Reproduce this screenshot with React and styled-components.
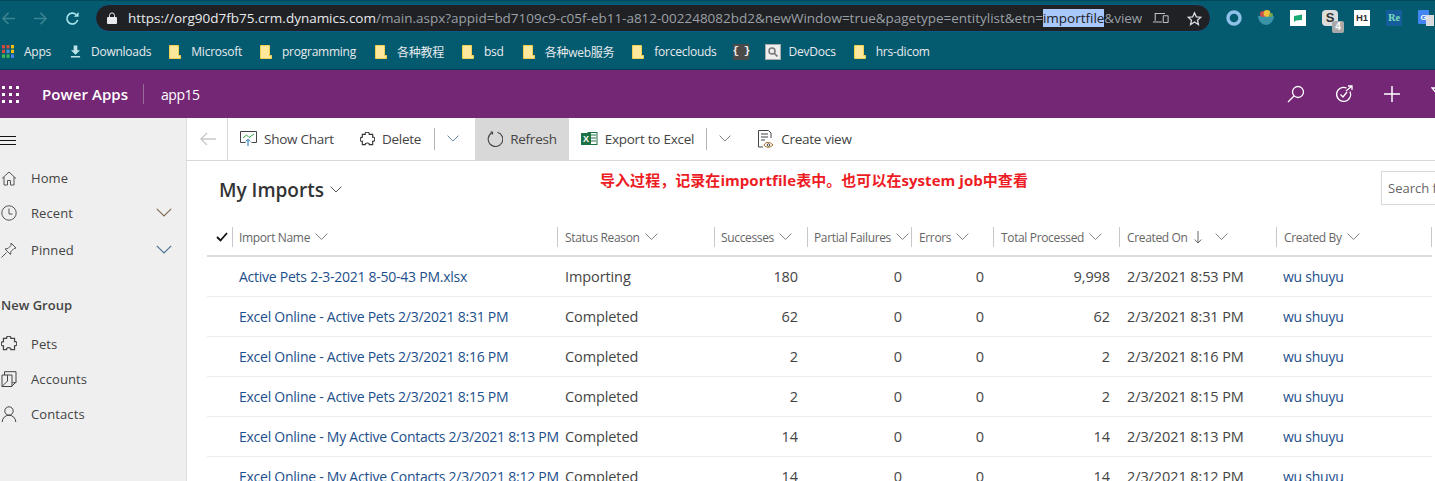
import React from 'react'
import styled, { createGlobalStyle } from 'styled-components'

const uiFont = `"Open Sans", "Noto Sans CJK SC", sans-serif`

const GlobalStyle = createGlobalStyle`
  html, body {
    margin: 0;
    padding: 0;
    background: #fff;
    font-family: ${uiFont};
  }
`

const columns = '25px 325px 157px 93px 104px 82px 126px 157px 155px'

const bookmarks = [
  { label: '各种教程', gap: 18 },
  { label: 'bsd', gap: 19 },
  { label: '各种web服务', gap: 18 },
  { label: 'forceclouds', gap: 16 },
]

const headers = [
  { label: 'Import Name', pad: 7 },
  { label: 'Status Reason', pad: 8 },
  { label: 'Successes', pad: 7 },
  { label: 'Partial Failures', pad: 7 },
  { label: 'Errors', pad: 8 },
  { label: 'Total Processed', pad: 8 },
  { label: 'Created On', pad: 8, sorted: true },
  { label: 'Created By', pad: 8 },
]

const rows = [
  ['Active Pets 2-3-2021 8-50-43 PM.xlsx', 'Importing', '180', '0', '0', '9,998', '2/3/2021 8:53 PM'],
  ['Excel Online - Active Pets 2/3/2021 8:31 PM', 'Completed', '62', '0', '0', '62', '2/3/2021 8:31 PM'],
  ['Excel Online - Active Pets 2/3/2021 8:16 PM', 'Completed', '2', '0', '0', '2', '2/3/2021 8:16 PM'],
  ['Excel Online - Active Pets 2/3/2021 8:15 PM', 'Completed', '2', '0', '0', '2', '2/3/2021 8:15 PM'],
  ['Excel Online - My Active Contacts 2/3/2021 8:13 PM', 'Completed', '14', '0', '0', '14', '2/3/2021 8:13 PM'],
  ['Excel Online - My Active Contacts 2/3/2021 8:12 PM', 'Completed', '14', '0', '0', '14', '2/3/2021 8:12 PM'],
]

function Chevron({ size = 12, color = '#666' }) {
  return (
    <svg width={size} height={size * 0.6} viewBox="0 0 20 12" fill="none" stroke={color} strokeWidth="1.4">
      <path d="M1 1l9 9 9-9" />
    </svg>
  )
}

function Folder() {
  return (
    <svg width="12" height="14" viewBox="0 0 12 14">
      <path d="M.5.5h9v10h2v3H.5z" fill="#ffe79b" stroke="#f5cf52" />
      <path d="M9.5 10.5h2" stroke="#f5cf52" />
    </svg>
  )
}

function Puzzle({ size = 16, color = '#333' }) {
  return (
    <svg width={size} height={size} viewBox="1.5 1.5 13 13" fill="none" stroke={color} strokeWidth="1">
      <path d="M3.500 3.500H6C5.500 1 10 1 9.500 3.500h3V6c2.500-.5 2.500 4 0 3.500v3h-3c.5-2-3.500-2-3.500 0H3.500v-3C1 10 1 6 3.500 6z" />
    </svg>
  )
}

function App() {
  return (
    <>
      <GlobalStyle />
      <Page>
        <BrowserBar>
          <NavIcons>
            <svg width="15" height="15" viewBox="0 0 16 16" fill="none" stroke="#3b8390" strokeWidth="1.6"><path d="M15 8H2M8 2L2 8l6 6" /></svg>
            <svg width="15" height="15" viewBox="0 0 16 16" fill="none" stroke="#3b8390" strokeWidth="1.6"><path d="M1 8h13M8 2l6 6-6 6" /></svg>
            <svg width="15" height="15" viewBox="0 0 16 16" fill="none" stroke="#a8e6ec" strokeWidth="1.7"><path d="M13.500 9.500A5.800 5.800 0 1 1 12 4" /><path d="M14.500 1v5h-5z" fill="#a8e6ec" stroke="none" /></svg>
          </NavIcons>
          <AddressBar>
            <svg width="10" height="12" viewBox="0 0 10 12"><path d="M1 5h8a1 1 0 0 1 1 1v5a1 1 0 0 1-1 1H1a1 1 0 0 1-1-1V6a1 1 0 0 1 1-1z" fill="#e8eaed" /><path d="M2.500 5V3.400a2.500 2.500 0 0 1 5 0V5" fill="none" stroke="#e8eaed" /></svg>
            <UrlText>
              <b>https://org90d7fb75.crm.dynamics.com</b>/main.aspx?appid=bd7109c9-c05f-eb11-a812-002248082bd2&amp;newWindow=true&amp;pagetype=entitylist&amp;etn=<mark>importfile</mark>&amp;view
            </UrlText>
            <svg width="16" height="12" viewBox="0 0 18 12" fill="none" stroke="#bdc1c6" strokeWidth="1.2"><path d="M2.500 9V1h11M0 10.500h10" /><rect x="11.500" y="3.500" width="5.500" height="7.500" rx=".5" /></svg>
            <svg width="15" height="15" viewBox="0 0 16 15" fill="none" stroke="#dadce0" strokeWidth="1.4"><path d="M8 1.500l2 4.300 4.600.5-3.400 3.100 1 4.600L8 11.300l-4.200 2.700 1-4.600L1.400 6.300 6 5.800z" /></svg>
          </AddressBar>
          <Extensions>
            <svg width="16" height="16" viewBox="0 0 16 16"><circle cx="8" cy="8" r="6" fill="none" stroke="#8ec1e8" strokeWidth="3.4" /></svg>
            <svg width="16" height="16" viewBox="0 0 16 16"><path d="M0 6h16a8 9 0 0 1-16 0z" fill="#3b93a8" /><circle cx="5" cy="4" r="3" fill="#c9534a" /><circle cx="9" cy="3.400" r="3.400" fill="#f3c03d" /><circle cx="13" cy="5" r="2" fill="#79a84a" /></svg>
            <svg width="16" height="16" viewBox="0 0 16 16"><rect width="16" height="16" fill="#fff" /><path d="M4 6l8-1.500V10l-6 .5L4 12z" fill="#19a974" /></svg>
            <ExtensionTile>S<ExtensionBadge>4</ExtensionBadge></ExtensionTile>
            <H1Tile>H1</H1Tile>
            <ReTile>Re</ReTile>
            <svg width="16" height="16" viewBox="0 0 16 16"><rect width="11" height="14" fill="#4285f4" rx="1" /><rect x="8" y="5" width="8" height="11" fill="#dadce0" /><text x="2.500" y="10" fontSize="8" fill="#fff" fontWeight="700" fontFamily="Liberation Sans">G</text></svg>
          </Extensions>
        </BrowserBar>

        <BookmarkBar>
          <BookmarkItem $gap={19}>
            <svg width="12" height="13" viewBox="0 0 12 13">
              {[0, 1, 2].map(r => [0, 1, 2].map(c => (
                <rect key={`${r}${c}`} x={c * 4.500} y={r * 4.700} width="3" height="3.400" fill={[['#d9483b', '#d9483b', '#f4c20d'], ['#d9483b', '#4a90d9', '#f4c20d'], ['#3cba54', '#3cba54', '#4885ed']][r][c]} />
              )))}
            </svg>
            <span>Apps</span>
          </BookmarkItem>
          <BookmarkItem $gap={18}>
            <svg width="11" height="13" viewBox="0 0 12 13" fill="#bfe3e8"><path d="M4 0h4v5h3L6 10 1 5h3zM1 11.500h10V13H1z" /></svg>
            <span>Downloads</span>
          </BookmarkItem>
          <BookmarkItem $gap={18}><Folder /><span>Microsoft</span></BookmarkItem>
          <BookmarkItem $gap={19}><Folder /><span>programming</span></BookmarkItem>
          {bookmarks.map(b => (
            <BookmarkItem key={b.label} $gap={b.gap}><Folder /><span>{b.label}</span></BookmarkItem>
          ))}
          <BookmarkItem $gap={16}><BracesTile>{'{ }'}</BracesTile></BookmarkItem>
          <BookmarkItem $gap={18} $inner={8}>
            <svg width="16" height="16" viewBox="0 0 16 16"><rect x=".5" y=".5" width="15" height="15" fill="#eee" stroke="#aaa" /><circle cx="7" cy="7" r="3" fill="none" stroke="#777" strokeWidth="1.500" /><path d="M9 9l3.500 3.500" stroke="#777" strokeWidth="1.700" /></svg>
            <span>DevDocs</span>
          </BookmarkItem>
          <BookmarkItem $gap={0}><Folder /><span>hrs-dicom</span></BookmarkItem>
        </BookmarkBar>

        <AppBar>
          <Waffle>
            {Array.from({ length: 9 }).map((_, i) => <i key={i} />)}
          </Waffle>
          <Brand>Power Apps</Brand>
          <AppName>app15</AppName>
          <AppBarIcons>
            <svg width="18" height="18" viewBox="0 0 18 18" fill="none" stroke="#fff" strokeWidth="1.300"><circle cx="11" cy="7" r="5.500" /><path d="M7 11l-6 6" /></svg>
            <svg width="18" height="18" viewBox="0 0 18 18" fill="none" stroke="#fff" strokeWidth="1.300"><path d="M15 6.500A7 7 0 1 1 11.500 3" /><path d="M5.500 9.500l2.500 2.500 4-5M11 6l6-5M13 1h4v4" /></svg>
            <svg width="18" height="18" viewBox="0 0 18 18" fill="none" stroke="#fff" strokeWidth="1.500"><path d="M9 1v16M1 9h16" /></svg>
            <svg width="18" height="18" viewBox="0 0 18 18" fill="none" stroke="#fff" strokeWidth="1.300"><path d="M1 3h16l-6 7v6l-4-2v-4z" /></svg>
          </AppBarIcons>
        </AppBar>

        <Body>
          <Sidebar>
            <Hamburger><i /><i /><i /></Hamburger>
            <NavItem $top={24}>
              <svg width="16" height="15" viewBox="0 0 15 15" fill="none" stroke="#555" strokeWidth="1"><path d="M.5 7.500L7.500 1l7 6.500M2.500 6v8h3.500V9.500h3V14h3.500V6" /></svg>
              Home
            </NavItem>
            <NavItem $top={17}>
              <svg width="16" height="16" viewBox="0 0 16 16" fill="none" stroke="#555" strokeWidth="1"><circle cx="8" cy="8" r="7.200" /><path d="M8 3.500V9h3.500" /></svg>
              Recent
              <NavChevron><Chevron size={16} color="#7c6a50" /></NavChevron>
            </NavItem>
            <NavItem $top={19}>
              <svg width="16" height="16" viewBox="0 0 16 16" fill="none" stroke="#555" strokeWidth="1"><path d="M10 1l5 5-2 .5-3 3-.5 3L4 7l3-.5 3-3zM5.500 10.500L.5 15.500" /></svg>
              Pinned
              <NavChevron><Chevron size={16} color="#4a6f8f" /></NavChevron>
            </NavItem>
            <GroupTitle>New Group</GroupTitle>
            <NavItem $top={21}>
              <Puzzle size={16} color="#444" />
              Pets
            </NavItem>
            <NavItem $top={17}>
              <svg width="16" height="16" viewBox="0 0 15 16" fill="none" stroke="#444" strokeWidth="1"><path d="M.5 4h10v11.500H.5zM3 4V.7h11.500v11H11M14 11.500L10.500 15" /><path d="M.5 15.500L6 10V4" /></svg>
              Accounts
            </NavItem>
            <NavItem $top={17}>
              <svg width="16" height="16" viewBox="0 0 15 16" fill="none" stroke="#444" strokeWidth="1"><circle cx="7.500" cy="5" r="4.200" /><path d="M.7 16a6.800 6.800 0 0 1 13.600 0" /></svg>
              Contacts
            </NavItem>
          </Sidebar>

          <Main>
            <CommandBar>
              <BackButton>
                <svg width="16" height="14" viewBox="0 0 16 14" fill="none" stroke="#c8c8c8" strokeWidth="1.300"><path d="M16 7H1M7 1L1 7l6 6" /></svg>
              </BackButton>
              <CommandButton $left={12} $right={26}>
                <svg width="17" height="16" viewBox="0 0 17 16" fill="none"><path d="M.5.5h16v11h-5M5.500 11.500h-5V.5" stroke="#444" /><path d="M3 7l3.500-3 2.500 2.500L14 3" stroke="#30a04a" /><path d="M8 15V8.500M5.800 10.500L8 8.300l2.200 2.200" stroke="#1a6fb5" /></svg>
                Show Chart
              </CommandButton>
              <CommandButton $left={0} $right={13}>
                <Puzzle size={15} />
                Delete
              </CommandButton>
              <CommandDivider />
              <SplitChevron $right={16}><Chevron color="#4a6f8f" /></SplitChevron>
              <CommandButton $active $left={12} $right={12}>
                <svg width="16" height="16" viewBox="0 0 16 16" fill="none" stroke="#444" strokeWidth="1.100"><path d="M5 1.800A7.300 7.300 0 1 0 10.500 1.200" /><path d="M3.500 1H5.500v2.500" /></svg>
                Refresh
              </CommandButton>
              <CommandButton $left={12} $right={12}>
                <svg width="17" height="16" viewBox="0 0 17 16"><rect x="7" y="1.500" width="9" height="12" fill="#fff" stroke="#1e7145" /><path d="M10 4h5M10 7h5M10 10h5" stroke="#1e7145" /><rect y="2" width="10" height="12" fill="#1e7145" /><text x="2" y="11" fontSize="9" fill="#fff" fontWeight="700" fontFamily="Liberation Sans">X</text></svg>
                Export to Excel
              </CommandButton>
              <CommandDivider />
              <SplitChevron $right={27}><Chevron color="#666" /></SplitChevron>
              <CommandButton $left={0} $right={0}>
                <svg width="16" height="18" viewBox="0 0 16 18" fill="none" stroke="#444" strokeWidth="1"><path d="M.5 17V.5h10L13 3v5M3 4h7M3 7h7M3 10h4M.5 17H5" /><path d="M6 15c2-3.500 6-3.500 9 0-3 3-7 3-9 0z" stroke="#a9701f" /><circle cx="10.500" cy="15" r="1.300" /></svg>
                Create view
              </CommandButton>
            </CommandBar>

            <TitleRow>
              <Title>My Imports</Title>
              <Chevron size={12} color="#333" />
              <SearchBox>Search for records</SearchBox>
              <Annotation>导入过程，记录在importfile表中。也可以在system job中查看</Annotation>
            </TitleRow>

            <HeaderRow>
              <CheckCell>
                <svg width="12" height="10" viewBox="0 0 12 10" fill="none" stroke="#111" strokeWidth="1.800"><path d="M1 5l3.500 3.500L11 1" /></svg>
              </CheckCell>
              {headers.map(h => (
                <HeaderCell key={h.label} $pad={h.pad}>
                  {h.label}
                  {h.sorted && <SortArrow><svg width="8" height="13" viewBox="0 0 8 13" fill="none" stroke="#666"><path d="M4 0v12M.7 8.500L4 12l3.300-3.500" /></svg></SortArrow>}
                  <Chevron size={13} color="#777" />
                </HeaderCell>
              ))}
              <HeaderEnd />
            </HeaderRow>

            {rows.map(r => (
              <Row key={r[0] + r[6]}>
                <span />
                <LinkCell>{r[0]}</LinkCell>
                <TextCell>{r[1]}</TextCell>
                <NumberCell>{r[2]}</NumberCell>
                <NumberCell>{r[3]}</NumberCell>
                <NumberCell>{r[4]}</NumberCell>
                <NumberCell>{r[5]}</NumberCell>
                <TextCell>{r[6]}</TextCell>
                <LinkCell>wu shuyu</LinkCell>
              </Row>
            ))}
          </Main>
        </Body>
      </Page>
    </>
  )
}

export default App

const Page = styled.div`
  width: 1435px;
  height: 481px;
  overflow: hidden;
  display: flex;
  flex-direction: column;
  background: #fff;
`

const BrowserBar = styled.div`
  height: 35px;
  flex: none;
  display: flex;
  align-items: center;
  background: #045b70;
  border-top: 1px solid #03485a;
  box-sizing: border-box;
`

const NavIcons = styled.div`
  width: 95px;
  flex: none;
  display: flex;
  gap: 17px;
  padding-left: 1px;
  box-sizing: border-box;
`

const AddressBar = styled.div`
  width: 1116px;
  height: 28px;
  flex: none;
  box-sizing: border-box;
  display: flex;
  align-items: center;
  padding: 0 8px 0 11px;
  gap: 6px;
  background: #202124;
  border: 1px solid #0b5d87;
  border-radius: 14px;
  color: #fff;
  > svg:nth-of-type(2) { margin-left: 5px; }
  > svg:nth-of-type(3) { margin-left: 12px; }
`

const UrlText = styled.div`
  flex: 1;
  min-width: 0;
  overflow: hidden;
  white-space: nowrap;
  margin-left: 5px;
  font-size: 13.5px;
  letter-spacing: -0.015px;
  color: #9aa0a6;
  > b { font-weight: 400; color: #e8eaed; }
  > mark { background: #a8c7fa; color: #202124; }
`

const Extensions = styled.div`
  display: flex;
  align-items: center;
  gap: 16px;
  margin-left: 15px;
  flex: none;
`

const ExtensionTile = styled.div`
  position: relative;
  width: 16px;
  height: 16px;
  border-radius: 4px;
  background: #ddd;
  color: #333;
  font: 700 13px/16px "Liberation Sans", sans-serif;
  text-align: center;
`

const ExtensionBadge = styled.span`
  position: absolute;
  right: -6px;
  bottom: -7px;
  width: 12px;
  height: 12px;
  border-radius: 2px;
  background: #a9a9a9;
  color: #fff;
  font: 700 10px/12px "Liberation Sans", sans-serif;
`

const H1Tile = styled.div`
  width: 16px;
  height: 16px;
  background: #fff;
  color: #333;
  font: 700 9.5px/16px "Liberation Sans", sans-serif;
  text-align: center;
`

const ReTile = styled.div`
  width: 16px;
  height: 16px;
  background: #155d9a;
  color: #7fe0c0;
  font: 700 10px/16px "Liberation Serif", serif;
  text-align: center;
`

const BookmarkBar = styled.div`
  height: 35px;
  flex: none;
  box-sizing: border-box;
  padding: 0 0 1px 2px;
  display: flex;
  align-items: center;
  background: #045b70;
  border-bottom: 1px solid #03404f;
`

const BookmarkItem = styled.div`
  display: flex;
  align-items: center;
  gap: ${p => p.$inner ?? 10}px;
  margin-right: ${p => p.$gap}px;
  font-size: 12px;
  letter-spacing: -0.25px;
  color: #e8eaed;
  white-space: nowrap;
`

const BracesTile = styled.div`
  width: 16px;
  height: 16px;
  background: #4a4a4a;
  color: #eee;
  font: 700 11px/15px "Liberation Mono", monospace;
  text-align: center;
  white-space: nowrap;
  letter-spacing: -1px;
`

const AppBar = styled.div`
  height: 48px;
  flex: none;
  display: flex;
  align-items: center;
  background: #742774;
  color: #fff;
`

const Waffle = styled.div`
  width: 17px;
  margin-left: 2px;
  display: grid;
  grid-template-columns: repeat(3, 3px);
  gap: 4px;
  > i { width: 3px; height: 3px; background: #fff; }
`

const Brand = styled.div`
  margin-left: 23px;
  font-size: 15px;
  font-weight: 600;
  letter-spacing: 0.05px;
  padding-right: 15px;
  border-right: 1px solid #9a6a9a;
  line-height: 20px;
`

const AppName = styled.div`
  margin-left: 17px;
  font-size: 14px;
  letter-spacing: -0.5px;
`

const AppBarIcons = styled.div`
  margin-left: auto;
  display: flex;
  gap: 30px;
  margin-right: -14px;
`

const Body = styled.div`
  flex: 1;
  min-height: 0;
  display: flex;
`

const Sidebar = styled.nav`
  width: 186px;
  flex: none;
  background: #efefef;
  border-right: 1px solid #dcdcdc;
  color: #333;
`

const Hamburger = styled.div`
  margin-top: 18px;
  width: 16px;
  display: flex;
  flex-direction: column;
  gap: 3px;
  > i { height: 1px; background: #111; display: block; }
`

const NavItem = styled.div`
  margin-top: ${p => p.$top}px;
  height: 18px;
  display: flex;
  align-items: center;
  font-size: 13px;
  letter-spacing: 0.1px;
  color: #444;
  > svg:first-child {
    margin-left: 1px;
    margin-right: 14px;
    flex: none;
  }
`

const NavChevron = styled.span`
  margin-left: auto;
  margin-right: 14px;
  display: flex;
`

const GroupTitle = styled.div`
  margin-top: 37px;
  padding-left: 1px;
  height: 18px;
  line-height: 18px;
  font-size: 13px;
  font-weight: 600;
  color: #444;
`

const Main = styled.main`
  flex: 1;
  min-width: 0;
  display: flex;
  flex-direction: column;
`

const CommandBar = styled.div`
  height: 43px;
  flex: none;
  box-sizing: border-box;
  display: flex;
  align-items: stretch;
  border-bottom: 1px solid #d8d8d8;
`

const BackButton = styled.div`
  width: 41px;
  flex: none;
  box-sizing: border-box;
  padding-left: 13px;
  display: flex;
  align-items: center;
  border-right: 1px solid #d8d8d8;
`

const CommandButton = styled.div`
  display: flex;
  align-items: center;
  gap: 7px;
  padding: 0 ${p => p.$right}px 0 ${p => p.$left}px;
  font-size: 13.5px;
  letter-spacing: -0.25px;
  color: #444;
  white-space: nowrap;
  background: ${p => (p.$active ? '#d8d8d8' : 'transparent')};
`

const CommandDivider = styled.div`
  width: 1px;
  height: 22px;
  align-self: center;
  background: #b5b5b5;
`

const SplitChevron = styled.div`
  display: flex;
  align-items: center;
  padding: 0 ${p => p.$right}px 0 12px;
`

const TitleRow = styled.div`
  position: relative;
  height: 58px;
  flex: none;
  box-sizing: border-box;
  padding: 0 0 0 32px;
  display: flex;
  align-items: center;
  gap: 6px;
`

const Title = styled.h1`
  margin: 0;
  font-size: 19px;
  font-weight: 600;
  color: #333;
`

const SearchBox = styled.div`
  position: absolute;
  left: 1194px;
  top: 10px;
  width: 200px;
  height: 34px;
  box-sizing: border-box;
  padding-left: 6px;
  border: 1px solid #d8d8d8;
  font-size: 13px;
  line-height: 32px;
  color: #666;
  white-space: nowrap;
`

const Annotation = styled.div`
  position: absolute;
  left: 413px;
  top: 9px;
  font-size: 15px;
  font-weight: 700;
  line-height: 20px;
  letter-spacing: 0.05px;
  color: #ed1c24;
  white-space: nowrap;
`

const HeaderRow = styled.div`
  height: 38px;
  flex: none;
  box-sizing: border-box;
  margin-left: 20px;
  padding: 8px 0;
  display: grid;
  grid-template-columns: ${columns} 1px;
  align-items: stretch;
  width: 1225px;
  border-bottom: 2px solid #dcdcdc;
`

const CheckCell = styled.div`
  display: flex;
  align-items: center;
  padding-left: 9px;
`

const HeaderCell = styled.div`
  display: flex;
  align-items: center;
  gap: 5px;
  padding-left: ${p => p.$pad - 1}px;
  border-left: 1px solid #c8c8c8;
  font-size: 12px;
  letter-spacing: -0.35px;
  color: #666;
  white-space: nowrap;
  overflow: hidden;
`

const HeaderEnd = styled.div`
  border-left: 1px solid #c8c8c8;
`

const SortArrow = styled.span`
  display: flex;
  margin: 0 8px 0 1px;
`

const Row = styled.div`
  height: 40px;
  flex: none;
  box-sizing: border-box;
  margin-left: 20px;
  width: 1225px;
  display: grid;
  grid-template-columns: ${columns};
  align-items: center;
  border-bottom: 1px solid #ececec;
  font-size: 14.5px;
  letter-spacing: -0.1px;
  white-space: nowrap;
`

const LinkCell = styled.div`
  padding-left: 7px;
  color: #1d4f8c;
  font-size: 14px;
  letter-spacing: -0.25px;
`

const TextCell = styled.div`
  padding-left: 8px;
  color: #444;
`

const NumberCell = styled.div`
  padding-right: 9px;
  text-align: right;
  color: #444;
`
